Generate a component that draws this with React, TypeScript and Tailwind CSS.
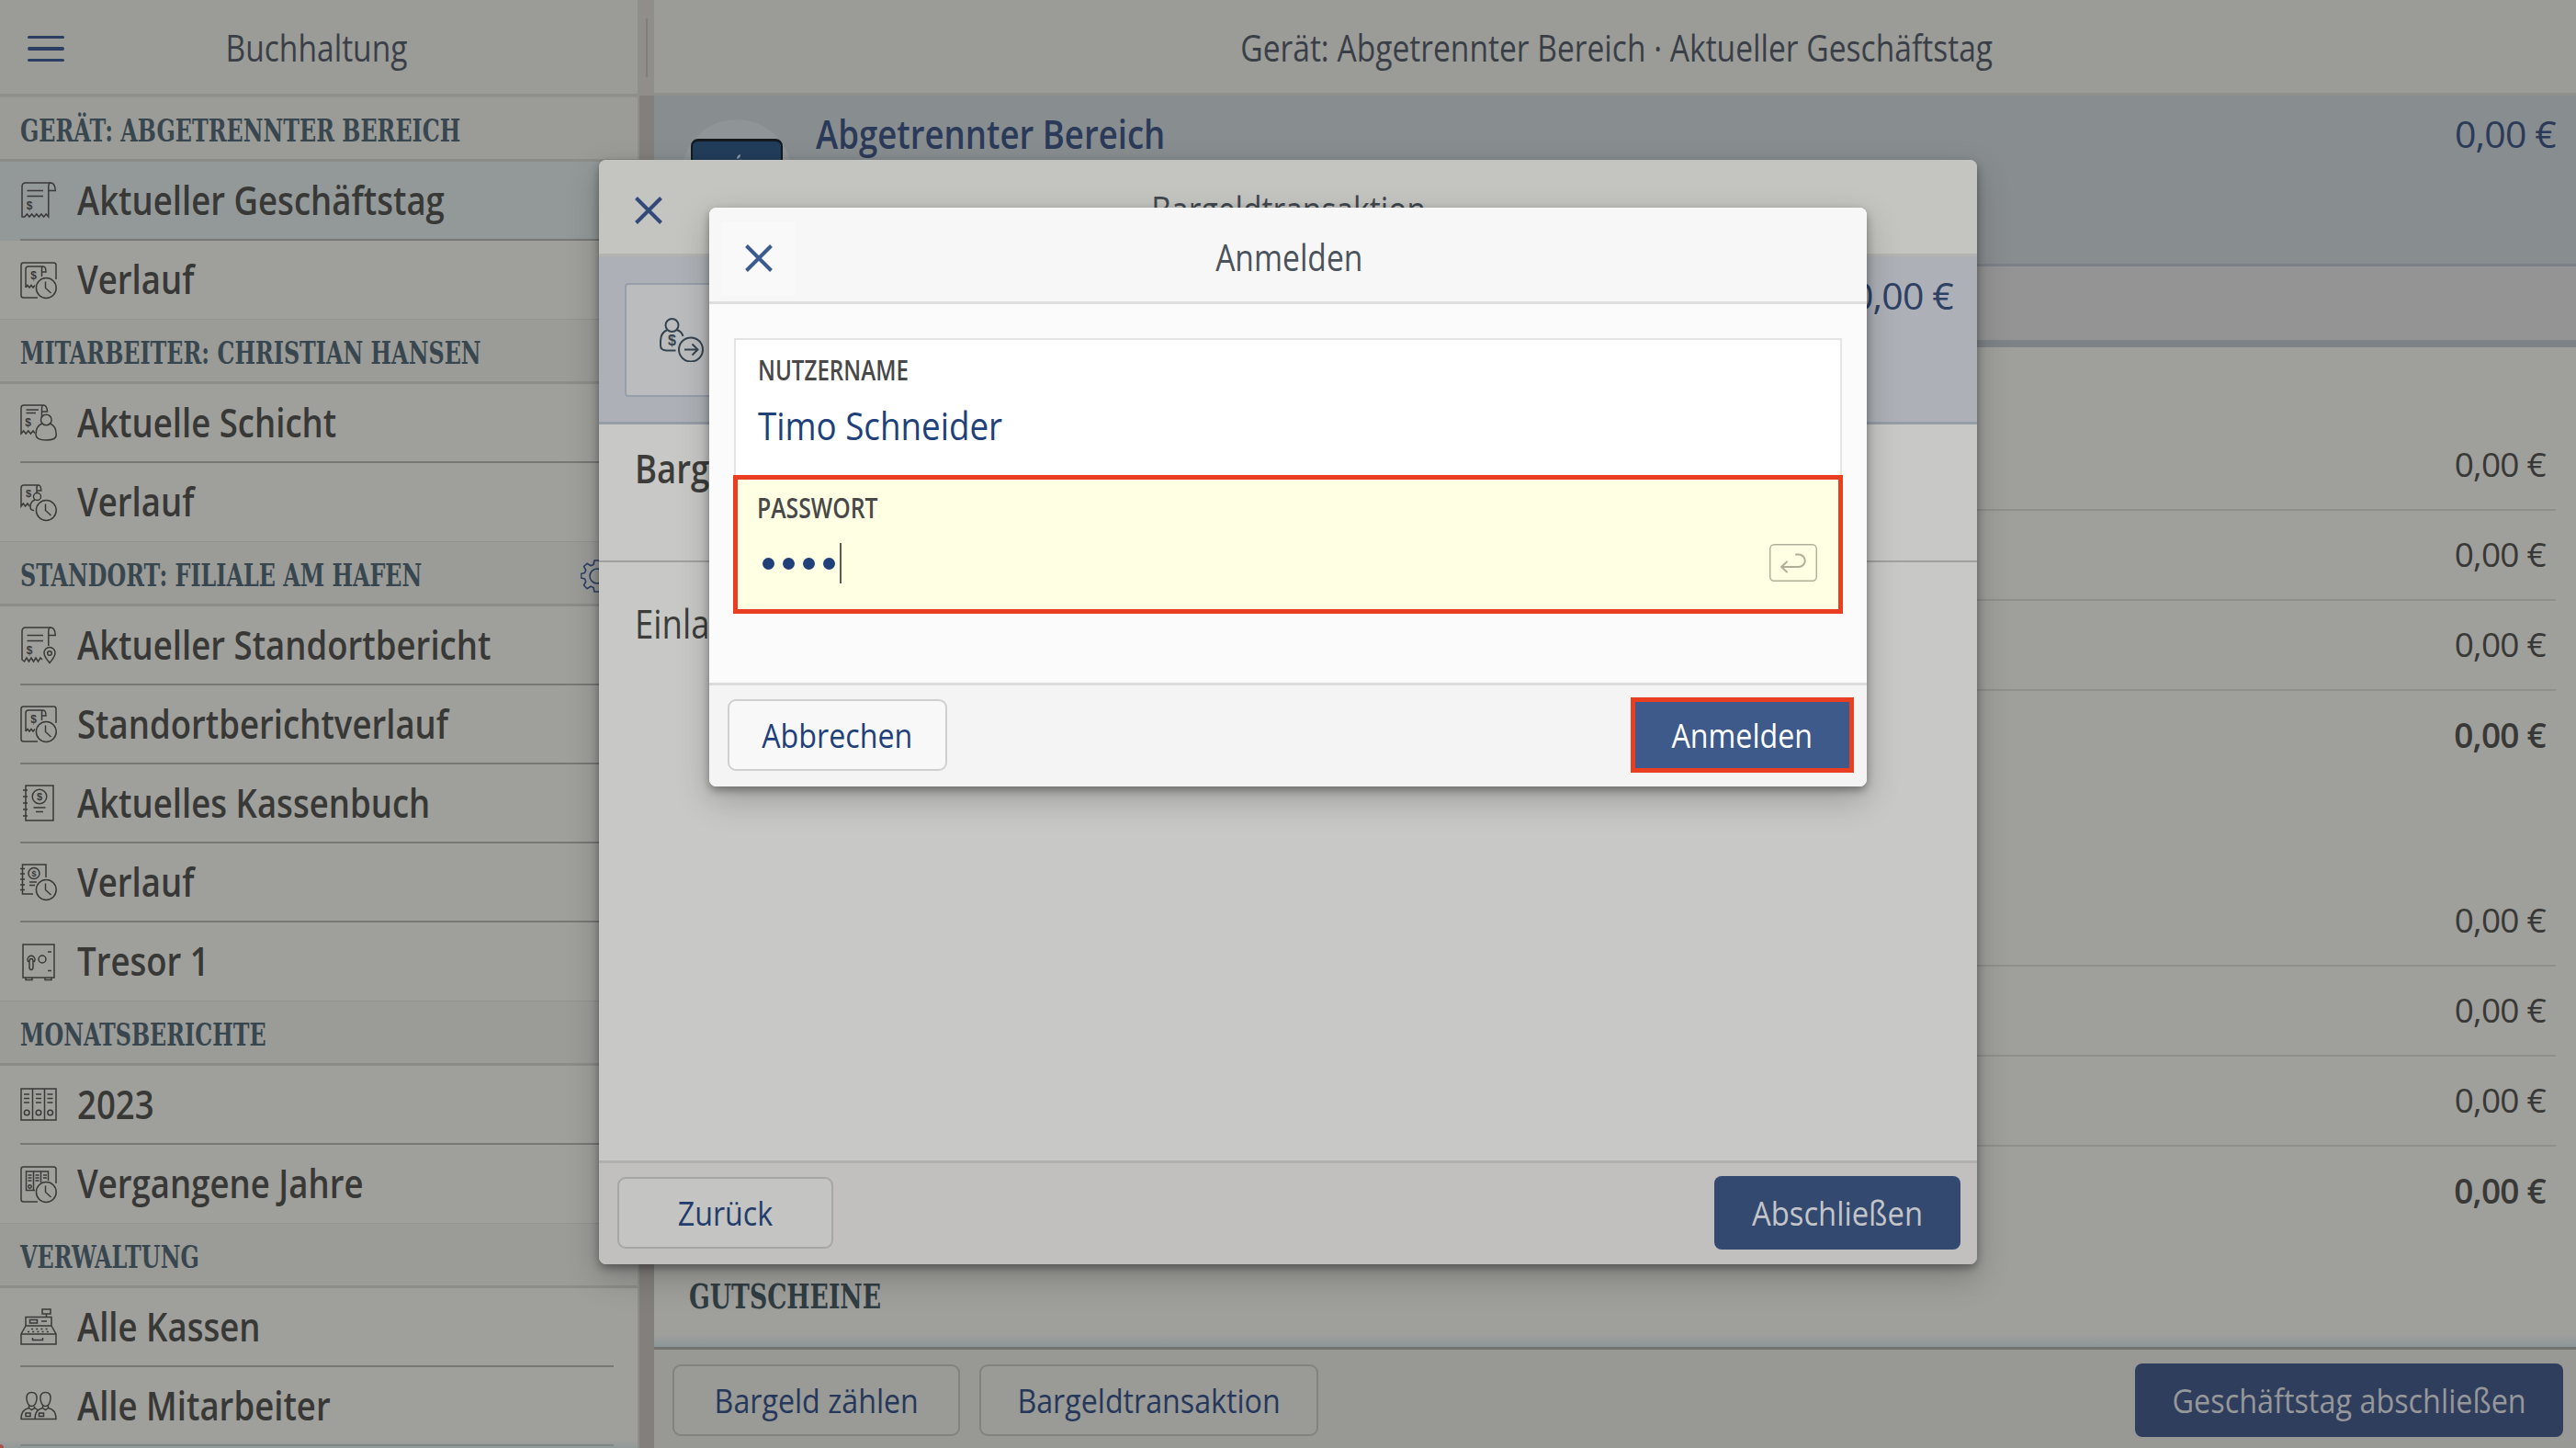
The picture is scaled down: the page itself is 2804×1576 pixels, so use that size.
import type { ReactNode } from "react";
import clsx from "clsx";

type IconName =
  | "receipt"
  | "receiptHistory"
  | "shift"
  | "shiftHistory"
  | "siteReport"
  | "cashbook"
  | "cashbookHistory"
  | "safe"
  | "binders"
  | "bindersHistory"
  | "register"
  | "staff";

interface NavItem {
  label: string;
  icon: IconName;
  active?: boolean;
}

interface NavSection {
  title: string;
  items: NavItem[];
  settings?: boolean;
}

const sections: NavSection[] = [
  {
    title: "Gerät: Abgetrennter Bereich",
    items: [
      { label: "Aktueller Geschäftstag", icon: "receipt", active: true },
      { label: "Verlauf", icon: "receiptHistory" },
    ],
  },
  {
    title: "Mitarbeiter: Christian Hansen",
    items: [
      { label: "Aktuelle Schicht", icon: "shift" },
      { label: "Verlauf", icon: "shiftHistory" },
    ],
  },
  {
    title: "Standort: Filiale am Hafen",
    settings: true,
    items: [
      { label: "Aktueller Standortbericht", icon: "siteReport" },
      { label: "Standortberichtverlauf", icon: "receiptHistory" },
      { label: "Aktuelles Kassenbuch", icon: "cashbook" },
      { label: "Verlauf", icon: "cashbookHistory" },
      { label: "Tresor 1", icon: "safe" },
    ],
  },
  {
    title: "Monatsberichte",
    items: [
      { label: "2023", icon: "binders" },
      { label: "Vergangene Jahre", icon: "bindersHistory" },
    ],
  },
  {
    title: "Verwaltung",
    items: [
      { label: "Alle Kassen", icon: "register" },
      { label: "Alle Mitarbeiter", icon: "staff" },
    ],
  },
];

function Dollar({ x, y, size = 11 }: { x: number; y: number; size?: number }) {
  return (
    <text x={x} y={y} fontSize={size} textAnchor="middle" fill="currentColor" stroke="none" fontFamily="Liberation Sans, sans-serif" fontWeight="bold">
      $
    </text>
  );
}

// clock badge in the lower right corner, shared by all history icons
const Clock = () => (
  <>
    <circle cx="28.3" cy="28.5" r="10.9" />
    <path d="M27.5 21.5v7l6 5.5" />
  </>
);

const icons: Record<IconName, ReactNode> = {
  receipt: (
    <>
      <path d="M2 38V5Q2 1 6 1h27q5 0 5.3 8.5h-7.5V38l-2.6-3-2.6 3-2.6-3-2.6 3-2.6-3-2.6 3-2.6-3-2.6 3-2.6-3-2.6 3z" />
      <path d="M30.8 9.5V5q0-4 2.6-4M7.5 9.5H25M7.5 15.5H25" />
      <Dollar x={10} y={29.5} size={12} />
    </>
  ),
  receiptHistory: (
    <>
      <path d="M39 19V3.5Q39 1 36.5 1h-33Q1 1 1 3.5v33Q1 39 3.5 39H19" />
      <path d="M6 28V8q0-3 3-3h16q3 0 3 6h-4.5v5M23.5 11V7.5q0-2.5 1.5-2.5M6 28l2-2.5 2 2.5 2-2.5 2 2.5 2-2.5" />
      <Dollar x={14.5} y={19} size={12} />
      <Clock />
    </>
  ),
  shift: (
    <>
      <path d="M23.5 14V5q0-4 2-4Q29 1 29.5 8h-6M26 1H4Q1 1 1 4v28l2.6-3 2.6 3 2.6-3 2.6 3 2.6-3 2 2.5M6.5 6H20M6.5 9.5H17" />
      <Dollar x={8.5} y={24} size={12} />
      <circle cx="28.3" cy="17" r="5.8" />
      <path d="M24 21q-7 2.5-7 12 0 6 11.3 6T39.2 33q0-9.5-7-12" />
    </>
  ),
  shiftHistory: (
    <>
      <path d="M18 9V4q0-3 2-3 2.5 0 2.8 6H18M20 1H4Q1 1 1 4v20l2.3-3 2.3 3 2.3-3 2.3 3" />
      <Dollar x={9} y={14} size={11} />
      <circle cx="18.5" cy="13.5" r="4" />
      <path d="M16 17q-5 2-5 7.5 0 4 4 4" />
      <Clock />
    </>
  ),
  siteReport: (
    <>
      <path d="M24 36l-2-2-2.5 4-2.5-4-2.5 4-2.5-4-2.5 4-2.5-4-2.5 4L2 36V5Q2 1 6 1h27q5 0 5.3 8.5h-7.5V21" />
      <path d="M30.8 9.5V5q0-4 2.6-4M7.5 9.5H25M7.5 15.5H25" />
      <Dollar x={10} y={29.5} size={12} />
      <path d="M32 39.5q-6-7-6-11a6 6 0 0 1 12 0q0 4-6 11z" />
      <circle cx="32" cy="29" r="2.3" />
    </>
  ),
  cashbook: (
    <>
      <path d="M6 1h30v38H6zM3 6h5M3 13h5M3 20h5M3 27h5M3 34h5M14.5 25h13M17 29.5h8" />
      <circle cx="21" cy="13" r="7.8" />
      <Dollar x={21} y={17} />
    </>
  ),
  cashbookHistory: (
    <>
      <path d="M28 15V1H2.5v32H14M0 5.5h5M0 11h5M0 17h5M0 23h5M0 28.5h5M10 20h8M10 23.5h6" />
      <circle cx="15" cy="10.5" r="6" />
      <Dollar x={15} y={14} size={9} />
      <Clock />
    </>
  ),
  safe: (
    <>
      <path d="M3 1h34v36H3zM6 37v2.5h7V37M27 37v2.5h7V37M30 9h4M30 29.5h4" />
      <circle cx="24" cy="17" r="4" />
      <path d="M9 20a4 4 0 1 1 6 0M10 19v6.5q0 3 2 3t2-3V19q0-2.5-2-2.5T10 19z" />
    </>
  ),
  binders: (
    <>
      <path d="M1 3h38v34H1zM13.5 3v34M26.5 3v34" />
      <path d="M4 9h6M4 13.5h6M4 18h6M17 9h6M17 13.5h6M17 18h6M29.5 9h6M29.5 13.5h6M29.5 18h6" />
      <circle cx="7.2" cy="29" r="2.8" />
      <circle cx="20" cy="29" r="2.8" />
      <circle cx="32.7" cy="29" r="2.8" />
    </>
  ),
  bindersHistory: (
    <>
      <path d="M39 19V3.5Q39 1 36.5 1h-33Q1 1 1 3.5v33Q1 39 3.5 39H19" />
      <path d="M16 26.5H6.5V6h24v10M14.5 6v20M22.5 6v12M8.5 10h4M8.5 13h4M8.5 16h4M16.5 10h4M16.5 13h4M16.5 16h4M25 10h4M25 13h4" />
      <circle cx="10.5" cy="22.5" r="1.7" />
      <Clock />
    </>
  ),
  register: (
    <>
      <path d="M24 1h9v5h-9zM28.5 6v3.5M6 9.5h28V19H6zM10.5 12.5h8v3.5h-8zM23 14h6M6 19L1 28v11h38V28l-5-9M1 28h38M13.5 32v2.5h11V32" />
      <path d="M12 22.5h18M8 25.5h25" strokeDasharray="2 3.2" />
    </>
  ),
  staff: (
    <>
      <path d="M12.5 5.5q6 0 5.5 7-1 8-5.5 8T7 12.5q-.5-7 5.5-7zM27.5 5.5q6 0 5.5 7-1 8-5.5 8T22 12.5q-.5-7 5.5-7z" />
      <path d="M9.5 19.5v3Q1 24 1 34.5h38Q39 24 30.5 22.5v-3M9.5 22.5l3 2 3-2v-2M15.5 22.5q3 1 4 3M24.5 19.5v3Q16 24 16 34.5M24.5 22.5l3 2 3-2M6 28h5v3.5H6zM20.5 28h5v3.5h-5z" />
    </>
  ),
};

function Icon({ name }: { name: IconName }) {
  return (
    <svg viewBox="0 0 40 40" className="size-10 shrink-0 overflow-visible text-[#3a3a38]" fill="none" stroke="currentColor" strokeWidth="1.5">
      {icons[name]}
    </svg>
  );
}

function Gear() {
  return (
    <svg viewBox="0 0 36 36" className="size-9 text-[#2c3f66]" fill="none" stroke="currentColor" strokeWidth="1.6" strokeLinejoin="round">
      <path d="M15 1h6l1 4.5 3 1.3 4-2.5 3.8 4L30.5 12l1.3 3 4 1v5l-4 1-1.3 3 2.3 4-3.8 3.7-4-2.4-3 1.2L21 35h-6l-1-4.5-3-1.2-4 2.4L3.5 28l2.2-4-1.2-3L.5 20v-4.5l4-1 1.2-3-2.2-4L7 4.3l4 2.5 3-1.3z" />
      <circle cx="18" cy="18" r="8" />
    </svg>
  );
}

function CloseIcon({ className }: { className: string }) {
  return (
    <svg viewBox="0 0 30 30" className={clsx("size-[30px]", className)} fill="none" stroke="currentColor" strokeWidth="4">
      <path d="M1.5 1.5l27 27M28.5 1.5l-27 27" />
    </svg>
  );
}

// The whole UI is set in a slightly narrowed sans
function Narrow({ children, className = "origin-center", scale = "scale-x-[0.85]" }: { children: ReactNode; className?: string; scale?: string }) {
  return <span className={clsx("inline-block whitespace-nowrap", scale, className)}>{children}</span>;
}

function SlabHeading({ children, className }: { children: ReactNode; className: string }) {
  return (
    <span className={clsx("origin-left whitespace-nowrap font-['DejaVu_Serif_Condensed','DejaVu_Serif',serif] font-bold uppercase", className)}>
      {children}
    </span>
  );
}

function Sidebar() {
  return (
    <aside className="flex w-[696px] shrink-0 flex-col border-r-2 border-[#8e8e8b] bg-[#9f9f9c]">
      <header className="flex h-[105px] shrink-0 items-center border-b-[3px] border-[#8f8f8c] bg-[#9b9b98] pt-1 pl-[30px]">
        <div className="flex w-10 flex-col gap-[9px]">
          <span className="h-[3.5px] rounded-full bg-[#2c3e62]" />
          <span className="h-[3.5px] rounded-full bg-[#2c3e62]" />
          <span className="h-[3.5px] rounded-full bg-[#2c3e62]" />
        </div>
        <h1 className="w-[550px] text-center text-[39.5px] text-[#3a3f47]">
          <Narrow>Buchhaltung</Narrow>
        </h1>
      </header>
      {sections.map((section) => (
        <section key={section.title}>
          <div className="flex h-[71px] items-center justify-between border-t border-b-[3px] border-t-[#92928f] border-b-[#8c8c89] bg-[#9b9b98] pt-1.5 pr-[26px] pl-[22px]">
            <SlabHeading className="scale-x-[0.803] text-[33px] text-[#38474f]">{section.title}</SlabHeading>
            {section.settings && <Gear />}
          </div>
          {section.items.map((item, i) => {
            const last = i === section.items.length - 1 && section.title !== "Verwaltung";
            return (
              <div key={item.label} className={clsx("pl-[22px]", item.active && "bg-[#939899]", last ? "h-[85px]" : "h-[86px]")}>
                <div className={clsx("mr-[26px] flex h-full items-center gap-[22px]", !last && "border-b-2 border-[#777775]")}>
                  <Icon name={item.icon} />
                  <Narrow className="origin-left text-[43px] font-semibold text-[#383836]">{item.label}</Narrow>
                </div>
              </div>
            );
          })}
        </section>
      ))}
    </aside>
  );
}

function AmountTable() {
  return (
    <div className="mr-[22px] ml-10 text-[37px] tracking-[-0.02em] text-[#383836]">
      {[false, false, false, true].map((total, i) => (
        <div key={i} className={clsx("flex h-[98px] items-center justify-end pr-[11px] pb-0.5", total ? "font-semibold" : "border-b-2 border-[#8f8f8c]")}>
          0,00 €
        </div>
      ))}
    </div>
  );
}

function GhostButton({ children, className }: { children: ReactNode; className: string }) {
  return (
    <button className={clsx("flex h-[78px] shrink-0 items-center justify-center rounded-[9px] border-2 text-[37px]", className)}>
      <Narrow scale="scale-x-[0.87]">{children}</Narrow>
    </button>
  );
}

function Main() {
  return (
    <main className="flex min-w-0 flex-1 flex-col bg-[#9f9f9c]">
      <header className="flex h-[104px] shrink-0 items-center justify-center border-b-[3px] border-[#8f8f8c] bg-[#9b9b98] pt-[5px] pl-1 text-[39.5px] text-[#3a3f47]">
        <Narrow>Gerät: Abgetrennter Bereich · Aktueller Geschäftstag</Narrow>
      </header>
      <div className="flex h-[186px] shrink-0 border-b-[3px] border-[#7b8088] bg-[#888d90] pr-[22px] pl-[30px]">
        <div className="mt-[26px] flex size-[120px] justify-center rounded-full bg-[#8f9496] pt-[21px]">
          <div className="flex h-[76px] w-[100px] shrink-0 justify-center rounded-lg border-2 border-t-[3px] border-[#141a20] bg-[#223d5b] pt-[14px]">
            <svg viewBox="0 0 16 20" className="h-5 w-4 fill-[#8b9aa6]">
              <path d="M8 5q0-4 4-5 .5 4-4 5zM8 7q6-3 8 1-4 3 0 7-3 7-8 4-5 3-8-5 0-9 8-7z" />
            </svg>
          </div>
        </div>
        <div className="flex flex-1 items-start justify-between pt-[10px] pl-[26px] text-[#2c3a59]">
          <Narrow className="origin-left text-[43px] font-semibold">Abgetrennter Bereich</Narrow>
          <span className="pt-px text-[41px] tracking-[-0.02em]">0,00 €</span>
        </div>
      </div>
      <div className="h-[88px] shrink-0 border-b-8 border-[#7e8387] bg-[#949494]" />
      <div className="flex flex-1 flex-col">
        <div className="pt-20">
          <AmountTable />
        </div>
        <div className="pt-[104px]">
          <AmountTable />
        </div>
        <div className="flex flex-1 items-center pt-[22px] pl-[38px]">
          <SlabHeading className="scale-x-[0.78] text-[38px] text-[#303d42]">Gutscheine</SlabHeading>
        </div>
        <div className="h-[14px] bg-linear-to-b from-[#9f9f9c] to-[#8c9698]" />
      </div>
      <footer className="flex h-[110px] shrink-0 items-center gap-[21px] border-t-[3px] border-[#72726f] bg-[#989895] pt-[3px] pr-[14px] pl-5">
        <GhostButton className="w-[313px] border-[#82827f] bg-[#9a9a97] text-[#25375a]">Bargeld zählen</GhostButton>
        <GhostButton className="w-[369px] border-[#82827f] bg-[#9a9a97] text-[#25375a]">Bargeldtransaktion</GhostButton>
        <button className="ml-auto h-20 w-[466px] rounded-lg bg-[#2f3e5c] text-[37px] text-[#96979a]">
          <Narrow scale="scale-x-[0.875]">Geschäftstag abschließen</Narrow>
        </button>
      </footer>
    </main>
  );
}

function CashDialog() {
  return (
    <div className="absolute top-[174px] left-[652px] flex h-[1202px] w-[1500px] flex-col overflow-hidden rounded-lg bg-[#c8c8c6]">
      <header className="flex h-[105px] shrink-0 items-center border-b-[3px] border-[#b5b3af] bg-[#c4c4c1] pt-2 pl-[39px]">
        <CloseIcon className="text-[#33497a]" />
        <h2 className="mr-[67px] flex-1 text-center text-[39.5px] text-[#42474f]">
          <Narrow>Bargeldtransaktion</Narrow>
        </h2>
      </header>
      <div className="flex h-[183px] shrink-0 items-start justify-between border-b-[3px] border-[#959da7] bg-[#adb1b7] pr-[26px] pl-7">
        <div className="mt-[29px] flex h-[124px] w-[300px] items-center rounded border-2 border-[#959ea9] bg-[#bbbcbe] pl-9">
          <svg viewBox="0 0 48 48" className="size-12 text-[#35444f]" fill="none" stroke="currentColor" strokeWidth="2">
            <circle cx="13.5" cy="8" r="7" />
            <path d="M8.5 13Q1 16 1 25v5q0 5 6 5.5h10.5M18.5 13q5.5 1.5 7 7" />
            <Dollar x={13.5} y={30} size={16} />
            <circle cx="34" cy="34.5" r="13" />
            <path d="M27 34.5h14M35.5 28.5l6 6-6 6" />
          </svg>
        </div>
        <span className="pt-3 text-[41px] tracking-[-0.02em] text-[#2f4065]">0,00 €</span>
      </div>
      <div className="flex-1 text-[43px] leading-[56px] text-[#3c3c3a]">
        <div className="h-[150px] border-b-2 border-[#a0a0a0] pt-5 pl-[39px] font-semibold">
          <Narrow className="origin-left">Bargeldtransaktion</Narrow>
        </div>
        <div className="pt-[39px] pl-[39px]">
          <Narrow className="origin-left">Einlage</Narrow>
        </div>
      </div>
      <footer className="flex h-[113px] items-center justify-between border-t-[3px] border-[#b1b0ae] bg-[#c1c0be] pr-[18px] pb-0.5 pl-5">
        <GhostButton className="w-[235px] border-[#a6a6a4] bg-[#c4c4c2] text-[#223c6b]">Zurück</GhostButton>
        <button className="h-20 w-[268px] rounded-lg bg-[#33496f] text-[37px] text-[#c3c5c8]">
          <Narrow scale="scale-x-[0.885]">Abschließen</Narrow>
        </button>
      </footer>
    </div>
  );
}

function LoginDialog() {
  return (
    <div className="absolute top-[226px] left-[772px] flex h-[630px] w-[1260px] flex-col overflow-hidden rounded-lg bg-[#fbfbfb]">
      <header className="flex h-[105px] shrink-0 items-center border-b-[3px] border-[#dedede] bg-[#f7f7f7] pt-[7px] pl-[14px]">
        <div className="flex h-20 w-20 items-center justify-center bg-[#f9f9f9]">
          <CloseIcon className="text-[#3b5a90]" />
        </div>
        <h2 className="mr-[92px] flex-1 text-center text-[39.5px] text-[#4a525c]">
          <Narrow>Anmelden</Narrow>
        </h2>
      </header>
      <div className="flex-1 px-[26px] pt-[37px]">
        <div className="mx-px h-[149px] border-2 border-b-0 border-[#e4e4e4] bg-white px-[24px] pt-[13px]">
          <div className="text-[30px] leading-[40px] font-semibold text-[#484848] uppercase">
            <Narrow scale="scale-x-[0.805]" className="origin-left">Nutzername</Narrow>
          </div>
          <div className="mt-[14px] text-[42px] leading-[52px] text-[#20407a]">
            <Narrow scale="scale-x-[0.875]" className="origin-left">Timo Schneider</Narrow>
          </div>
        </div>
        <div className="flex h-[151px] items-start justify-between border-[5px] border-[#ea3e23] bg-[#ffffe4] pr-[23px] pl-[21px]">
          <div className="pt-[11px]">
            <div className="text-[30px] leading-[40px] font-semibold text-[#484848] uppercase">
              <Narrow scale="scale-x-[0.825]" className="origin-left">Passwort</Narrow>
            </div>
            <div className="mt-[18px] flex h-11 items-center gap-[9px] pl-[6px]">
              {[0, 1, 2, 3].map((i) => (
                <span key={i} className="size-[13px] rounded-full bg-[#20407a]" />
              ))}
              <span className="-ml-[4px] h-11 w-[2px] bg-[#5a5a50]" />
            </div>
          </div>
          <svg viewBox="0 0 52 41" className="mt-[70px] h-[41px] w-[52px] text-[#b0ae98]" fill="none" stroke="currentColor" strokeLinecap="round" strokeLinejoin="round">
            <rect x=".75" y=".75" width="50.5" height="39.5" rx="4.5" strokeWidth="1.4" />
            <path d="M19 19.500l-6 5.500 6 5.500M13 25h19a6.700 6.700 0 0 0 0-13.500h-3" strokeWidth="2" />
          </svg>
        </div>
      </div>
      <footer className="flex h-[113px] items-center justify-between border-t-[3px] border-[#dcdcdc] bg-[#f4f4f4] pr-[14px] pb-0.5 pl-5">
        <GhostButton className="w-[239px] border-[#cfcfcf] bg-[#f8f8f8] text-[#20407a]">Abbrechen</GhostButton>
        <button className="h-[82px] w-[243px] border-[5px] border-[#ea3e23] bg-[#3d5a8b] text-[37px] text-white">
          <Narrow scale="scale-x-[0.87]">Anmelden</Narrow>
        </button>
      </footer>
    </div>
  );
}

export default function App() {
  return (
    <div className="relative flex h-[1576px] w-[2804px] overflow-hidden bg-[#9f9f9c] font-['Open_Sans',sans-serif]">
      <Sidebar />
      <div className="flex w-4 shrink-0 flex-col bg-[#827f7c]">
        <div className="flex h-[104px] justify-center bg-[#8f8e8b] py-5">
          <span className="w-0.5 bg-[#7e7e7b]" />
        </div>
      </div>
      <Main />
      <div className="absolute bottom-0 left-0 h-2 w-[694px] bg-linear-to-b from-transparent to-[#8c9698]/70" />
      <div className="absolute bottom-0 left-0 size-1 rounded-tr-full bg-[#a8524a]" />
      <div className="absolute top-[174px] left-[652px] h-[1202px] w-[1500px] rounded-lg shadow-[0_14px_36px_rgba(0,0,0,0.22),0_4px_10px_rgba(0,0,0,0.35)]" />
      <CashDialog />
      <div className="absolute top-[226px] left-[772px] h-[630px] w-[1260px] rounded-lg shadow-[0_14px_36px_rgba(0,0,0,0.22),0_4px_10px_rgba(0,0,0,0.35)]" />
      <LoginDialog />
    </div>
  );
}
